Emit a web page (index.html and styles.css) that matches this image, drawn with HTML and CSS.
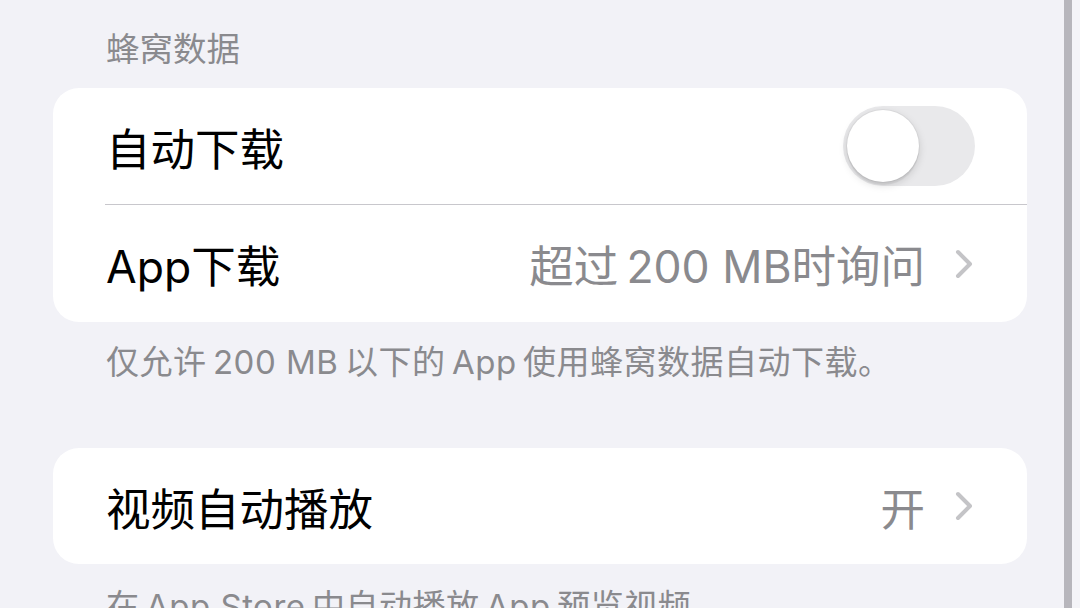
FILE: index.html
```html
<!DOCTYPE html>
<html lang="zh-CN">
<head>
<meta charset="utf-8">
<link rel="stylesheet" href="styles.css">
</head>
<body>
<div class="screen">
  <main class="content">
    <div class="section-header">蜂窝数据</div>
    <div class="card">
      <div class="row">
        <span class="label">自动下载</span>
        <span class="toggle"><span class="knob"></span></span>
      </div>
      <div class="sep"></div>
      <div class="row">
        <span class="label">App下载</span>
        <span class="value">超过&#8201;200 MB时询问</span>
        <svg class="chev" viewBox="0 0 18 30" width="18" height="30"><path d="M3 3 L15 15 L3 27" fill="none" stroke="#c4c4c7" stroke-width="4" stroke-linecap="round" stroke-linejoin="round"/></svg>
      </div>
    </div>
    <div class="section-footer">仅允许&#8201;200 MB&#8201;以下的&#8201;App&#8201;使用蜂窝数据自动下载。</div>
    <div class="card card-2">
      <div class="row">
        <span class="label">视频自动播放</span>
        <span class="value">开</span>
        <svg class="chev" viewBox="0 0 18 30" width="18" height="30"><path d="M3 3 L15 15 L3 27" fill="none" stroke="#c4c4c7" stroke-width="4" stroke-linecap="round" stroke-linejoin="round"/></svg>
      </div>
    </div>
    <div class="section-footer footer-2">在&#8201;App Store&#8201;中自动播放&#8201;App&#8201;预览视频</div>
  </main>
  <div class="scrollbar"></div>
  <div class="edge"></div>
</div>
</body>
</html>
```
FILE: styles.css
```css
html, body {
  margin: 0;
  padding: 0;
  background: #f2f2f7;
}
body {
  width: 1080px;
  height: 608px;
  overflow: hidden;
  font-family: Inter, "Noto Sans CJK SC", "Noto Sans", sans-serif;
}
.screen {
  display: flex;
  height: 608px;
}
.content {
  width: 1064px;
  padding-left: 53px;
  box-sizing: border-box;
}
.section-header {
  margin-top: 29px;
  padding-left: 53px;
  font-size: 33.5px;
  line-height: 40px;
  color: #8a8a8e;
}
.card {
  margin-top: 19px;
  width: 974px;
  background: #ffffff;
  border-radius: 26px;
  overflow: hidden;
}
.card-2 {
  margin-top: 66px;
}
.row {
  display: flex;
  align-items: center;
  height: 116px;
  padding: 0 54px 0 53px;
}
.label {
  flex: 1;
  font-size: 44.5px;
  color: #000000;
}
.value {
  font-size: 44.5px;
  color: #8a8a8e;
  margin-right: 30px;
}
.chev {
  display: block;
}
.sep {
  height: 1px;
  margin-left: 52px;
  background: #c8c7cc;
}
.card .sep + .row {
  height: 117px;
}
.toggle {
  width: 132px;
  height: 80px;
  border-radius: 40px;
  background: #e9e9eb;
  display: flex;
  align-items: center;
  padding-left: 4px;
  box-sizing: border-box;
  margin-right: -2px;
}
.knob {
  width: 72px;
  height: 72px;
  border-radius: 50%;
  background: #ffffff;
  box-shadow: 0 3px 8px rgba(0,0,0,0.15), 0 3px 1px rgba(0,0,0,0.06), 0 0 0 1px rgba(0,0,0,0.04);
}
.section-footer {
  margin-top: 20px;
  padding-left: 53px;
  font-size: 33px;
  line-height: 40px;
  color: #8a8a8e;
  letter-spacing: 0.5px;
  white-space: nowrap;
}
.footer-2 {
  margin-top: 22px;
}
.scrollbar {
  width: 8px;
  background: #b7b6bc;
}
.edge {
  flex: 1;
  background: #f4f4f8;
}
```
